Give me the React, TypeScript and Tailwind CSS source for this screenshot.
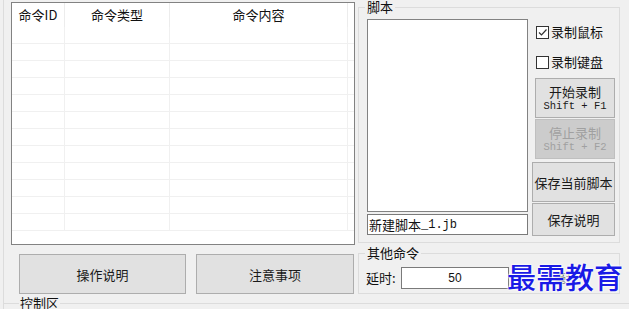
import React from "react";

const rows = Array.from({ length: 12 });

function Btn({
  children,
  className = "",
  disabled = false,
}: {
  children: React.ReactNode;
  className?: string;
  disabled?: boolean;
}) {
  return (
    <div
      className={`flex flex-col items-center justify-center border leading-[15px] ${
        disabled
          ? "border-[#bfbfbf] bg-[#cccccc] text-[#a0a0a0]"
          : "border-[#adadad] bg-[#e1e1e1] text-[#1a1a1a]"
      } ${className}`}
    >
      {children}
    </div>
  );
}

function Check({ checked, label }: { checked?: boolean; label: string }) {
  return (
    <div className="flex items-center gap-[2px]">
      <div className="flex h-[13px] w-[13px] items-center justify-center border border-[#333] bg-white">
        {checked && (
          <svg width="11" height="11" viewBox="0 0 11 11">
            <path d="M2 5.5 L4.5 8 L9.5 2.5" fill="none" stroke="#333" strokeWidth="1.2" />
          </svg>
        )}
      </div>
      <span className="text-[13px] leading-[16px]">{label}</span>
    </div>
  );
}

export default function App() {
  return (
    <div className="relative h-[309px] w-[629px] overflow-hidden bg-[#f0f0f0] font-['Noto_Sans_CJK_SC',sans-serif] text-[13px] text-[#111]">
      <div className="flex h-[303px]">
        {/* left side */}
        <div className="ml-[3px] w-[355px] border-l border-[#dcdcdc]">
          <div className="ml-[7px] mt-[2px] flex h-[243px] w-[344px] flex-col border border-[#828282] bg-white">
            <div className="flex h-[24px] shrink-0 text-[13px]">
              <div className="flex w-[53px] items-center justify-center border-r border-[#ececec]">
                命令ID
              </div>
              <div className="flex w-[105px] items-center justify-center border-r border-[#ececec]">
                命令类型
              </div>
              <div className="flex w-[178px] items-center justify-center border-r border-[#ececec]">
                命令内容
              </div>
              <div className="flex-1" />
            </div>
            {rows.map((_, i) => (
              <div key={i} className="flex h-[17px] shrink-0 border-b border-[#f0f0f0]">
                <div className="w-[53px] border-r border-[#f0f0f0]" />
                <div className="w-[105px] border-r border-[#f0f0f0]" />
                <div className="w-[178px] border-r border-[#f0f0f0]" />
                <div className="flex-1" />
              </div>
            ))}
          </div>
          <div className="ml-[15px] mt-[9px] flex gap-[10px] text-[13px]">
            <Btn className="h-[40px] w-[167px]">操作说明</Btn>
            <Btn className="h-[40px] w-[158px]">注意事项</Btn>
          </div>
        </div>

        {/* right side */}
        <div className="w-[262px]">
          <div className="relative mt-[7px] h-[236px] border border-[#dcdcdc]">
            <span className="absolute left-[6px] top-[-8px] bg-[#f0f0f0] px-[2px] leading-[14px]">脚本</span>
            <div className="flex pl-[8px] pt-[11px]">
              <div className="flex w-[161px] flex-col">
                <div className="h-[193px] border border-[#828282] bg-white" />
                <div className="mt-[2px] flex h-[21px] items-center border border-[#7a7a7a] bg-white pl-[1px] leading-[16px]">
                  新建脚本<span className="font-['Liberation_Mono',monospace] text-[12px]">_1.jb</span>
                </div>
              </div>
              <div className="ml-[4px] flex flex-col">
                <div className="ml-[4px] mt-[5px]">
                  <Check checked label="录制鼠标" />
                </div>
                <div className="ml-[4px] mt-[14px]">
                  <Check label="录制键盘" />
                </div>
                <Btn className="ml-[3px] mt-[8px] h-[40px] w-[80px]">
                  <span className="leading-[16px]">开始录制</span>
                  <span className="font-['Liberation_Mono',monospace] text-[10.5px] leading-[12px]">Shift + F1</span>
                </Btn>
                <Btn disabled className="ml-[3px] mt-[1px] h-[40px] w-[80px]">
                  <span className="leading-[16px]">停止录制</span>
                  <span className="font-['Liberation_Mono',monospace] text-[10.5px] leading-[12px]">Shift + F2</span>
                </Btn>
                <Btn className="mt-[3px] h-[40px] w-[83px] bg-[#dadada]">保存当前脚本</Btn>
                <Btn className="mt-[1px] h-[33px] w-[83px]">保存说明</Btn>
              </div>
            </div>
          </div>

          <div className="relative mt-[10px] h-[41px] border border-[#dcdcdc]">
            <span className="absolute left-[6px] top-[-8px] bg-[#f0f0f0] px-[2px] leading-[14px]">其他命令</span>
            <div className="flex items-center pl-[7px] pt-[13px]">
              <span className="w-[35px] leading-[16px]">延时:</span>
              <div className="flex h-[22px] w-[108px] items-center justify-center border border-[#7a7a7a] bg-white font-['Liberation_Sans',sans-serif] text-[12px]">
                50
              </div>
              <span className="ml-[45px] text-[12px] leading-[14px] text-[#555]">毫秒</span>
            </div>
          </div>
        </div>
      </div>

      {/* 控制区 */}
      <div className="relative ml-[3px] h-[20px] border-l border-t border-[#dcdcdc]">
        <span className="absolute left-[15px] top-[-8px] bg-[#f0f0f0] px-[1px] leading-[14px]">控制区</span>
      </div>

      {/* watermark */}
      <div className="absolute left-[507px] top-[258px] whitespace-nowrap text-[29px] font-medium leading-[36px] text-[#1a1ae6] [text-shadow:0_0_2px_#fff,0_0_2px_#fff,0_0_3px_#fff]">
        最需教育
      </div>
    </div>
  );
}
